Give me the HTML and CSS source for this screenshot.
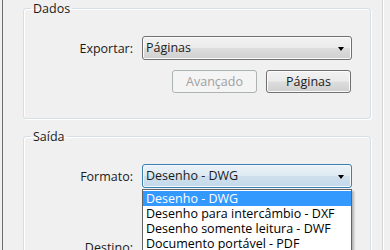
FILE: index.html
```html
<!DOCTYPE html>
<html>
<head>
  <meta charset="UTF-8">
  <title>Exportar</title>
  <link rel="stylesheet" href="styles.css">
</head>
<body>
  <div class="panel">
    <fieldset class="group">
      <legend>Dados</legend>
      <div class="row">
        <label class="caption">Exportar:</label>
        <div class="combo">Páginas<span class="arrow"></span></div>
      </div>
      <div class="buttons">
        <button class="btn" disabled>Avançado</button>
        <button class="btn">Páginas</button>
      </div>
    </fieldset>

    <fieldset class="group group-out">
      <legend>Saída</legend>
      <div class="row">
        <label class="caption">Formato:</label>
        <div class="combo-wrap">
          <div class="combo combo-open">Desenho - DWG<span class="arrow"></span></div>
          <ul class="dropdown">
            <li class="selected">Desenho - DWG</li>
            <li>Desenho para intercâmbio - DXF</li>
            <li>Desenho somente leitura - DWF</li>
            <li>Documento portável - PDF</li>
          </ul>
        </div>
      </div>
      <div class="row row-dest">
        <label class="caption">Destino:</label>
        <div class="combo"></div>
      </div>
    </fieldset>
  </div>
</body>
</html>
```

FILE: styles.css
```css
html, body {
  margin: 0;
  height: 100%;
}
body {
  background: #f0f0f0;
  font-family: "Open Sans", "Noto Sans", sans-serif;
  font-size: 12px;
  color: #1b1b1b;
  overflow: hidden;
}
.panel {
  margin-left: 2px;
  width: 381px;
  height: 100%;
  padding-top: 1px;
  box-sizing: border-box;
  border-left: 1px solid #6d6d6d;
  border-right: 1px solid #d4d4d4;
  box-shadow: 1px 0 0 #fff;
}
.group {
  margin: 0 0 0 20px;
  width: 346px;
  padding: 0 0 25px 0;
  border: 1px solid #d5dfe5;
  border-radius: 3px;
  box-shadow: inset 1px 1px 0 #fff, 1px 1px 0 #fff;
}
.group legend {
  margin-left: 7px;
  padding: 0 2px;
  line-height: 15px;
  font-size: 12.5px;
}
.group-out {
  margin-top: 10px;
}
.row {
  display: flex;
  align-items: center;
  gap: 9px;
  margin-top: 20px;
}
.caption {
  width: 109px;
  text-align: right;
  font-size: 12.5px;
}
.combo-wrap {
  position: relative;
  z-index: 2;
}
.combo {
  position: relative;
  width: 210px;
  height: 24px;
  box-sizing: border-box;
  padding-left: 3px;
  line-height: 22px;
  font-size: 12.5px;
  border: 1px solid #707070;
  border-radius: 3px;
  background: linear-gradient(#f2f2f2 0%, #ebebeb 48%, #dddddd 52%, #cfcfcf 100%);
  box-shadow: inset 0 0 0 1px #fcfcfc;
}
.combo-open {
  border-color: #3c7fb1;
  background: linear-gradient(#ecf3f8 0%, #dde9f2 50%, #cfe0ed 51%, #c2d8ea 100%);
  box-shadow: inset 0 0 0 1px #f4f9fc;
}
.arrow {
  position: absolute;
  right: 7px;
  top: 10px;
  border-left: 3.5px solid transparent;
  border-right: 3.5px solid transparent;
  border-top: 4px solid #000;
}
.buttons {
  display: flex;
  gap: 9px;
  margin: 10px 0 0 148px;
}
.btn {
  width: 85px;
  height: 23px;
  padding: 0;
  font-family: inherit;
  font-size: 12.5px;
  color: #1b1b1b;
  border: 1px solid #707070;
  border-radius: 3px;
  background: linear-gradient(#f2f2f2 0%, #ebebeb 48%, #dddddd 52%, #cfcfcf 100%);
  box-shadow: inset 0 0 0 1px #fcfcfc;
}
.btn:disabled {
  color: #a0a0a0;
  border-color: #adb2b5;
  background: #f4f4f4;
  box-shadow: none;
}
.dropdown {
  position: absolute;
  left: 0;
  top: 25px;
  width: 210px;
  box-sizing: border-box;
  margin: 0;
  padding: 1px 0;
  list-style: none;
  background: #fff;
  border: 1px solid #646464;
  box-shadow: 2px 2px 2px rgba(0, 0, 0, 0.25);
  font-size: 12.5px;
}
.dropdown li {
  height: 15px;
  line-height: 15px;
  padding-left: 3px;
  color: #000;
  white-space: nowrap;
}
.dropdown li.selected {
  background: #3399ff;
  color: #fff;
}
.row-dest {
  margin-top: 47px;
}
```
